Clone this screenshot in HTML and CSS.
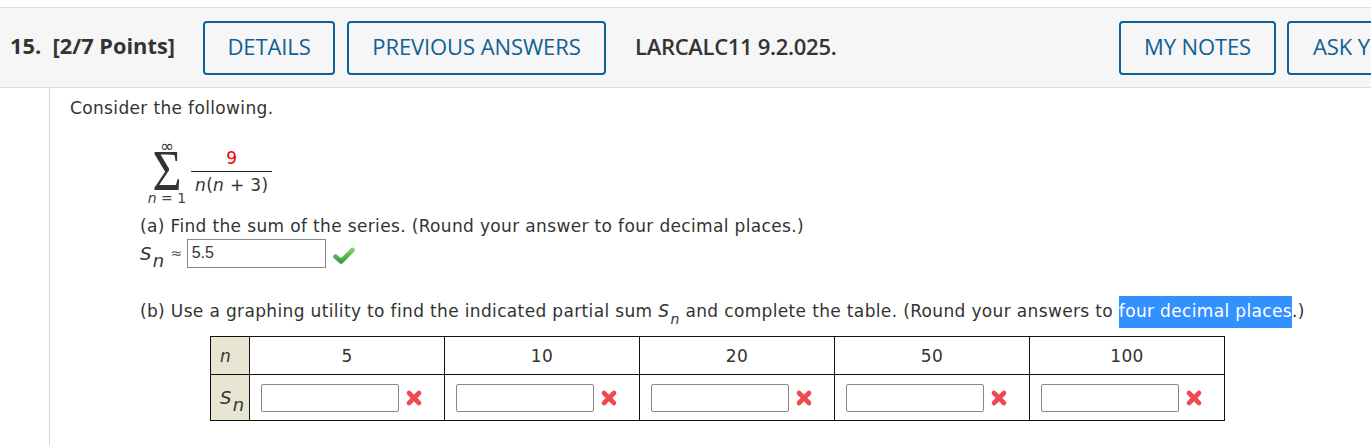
FILE: index.html
```html
<!DOCTYPE html>
<html>
<head>
<meta charset="utf-8">
<link rel="stylesheet" href="styles.css">
</head>
<body>
<div class="page">
  <header class="qhead">
    <div class="qnum">15.&nbsp; [2/7 Points]</div>
    <button class="btn btn-details">DETAILS</button>
    <button class="btn btn-prev">PREVIOUS ANSWERS</button>
    <div class="code">LARCALC11 9.2.025.</div>
    <div class="spacer"></div>
    <button class="btn btn-notes">MY NOTES</button>
    <button class="btn btn-ask">ASK YOUR TEACHER</button>
  </header>
  <main class="qbody">
    <p class="intro">Consider the following.</p>
    <div class="series">
      <div class="sigma">
        <span class="sup">∞</span>
        <span class="sym">Σ</span>
        <span class="sub"><i>n</i> = 1</span>
      </div>
      <div class="frac">
        <span class="num">9</span>
        <span class="den"><i>n</i>(<i>n</i> + 3)</span>
      </div>
    </div>
    <p class="part parta">(a) Find the sum of the series. (Round your answer to four decimal places.)</p>
    <div class="answer">
      <span class="sn"><i>S</i><sub><i>n</i></sub></span>
      <span class="approx">≈</span>
      <span class="box">5.5</span>
      <svg class="check" width="22" height="18" viewBox="0 0 22 18"><defs><linearGradient id="g" x1="0" y1="0" x2="0" y2="1"><stop offset="0" stop-color="#7ccf6a"/><stop offset="1" stop-color="#3f9e3f"/></linearGradient></defs><path d="M2.5 9.5 L8 14.5 L19.5 3" fill="none" stroke="url(#g)" stroke-width="4.6" stroke-linecap="round" stroke-linejoin="round"/></svg>
    </div>
    <p class="part partb">(b) Use a graphing utility to find the indicated partial sum <i>S</i><sub><i>n</i></sub> and complete the table. (Round your answers to <span class="sel">four decimal places</span>.)</p>
    <table class="tbl">
      <tr class="r1">
        <th><i>n</i></th>
        <td>5</td><td>10</td><td>20</td><td>50</td><td>100</td>
      </tr>
      <tr class="r2">
        <th><i>S</i><sub><i>n</i></sub></th>
        <td><span class="cell"><span class="inp"></span><svg class="xm" width="20" height="20" viewBox="0 0 20 20"><path d="M5 5 L15 15 M15 5 L5 15" stroke="#ee4a50" stroke-width="4.6" stroke-linecap="round"/></svg></span></td>
        <td><span class="cell"><span class="inp"></span><svg class="xm" width="20" height="20" viewBox="0 0 20 20"><path d="M5 5 L15 15 M15 5 L5 15" stroke="#ee4a50" stroke-width="4.6" stroke-linecap="round"/></svg></span></td>
        <td><span class="cell"><span class="inp"></span><svg class="xm" width="20" height="20" viewBox="0 0 20 20"><path d="M5 5 L15 15 M15 5 L5 15" stroke="#ee4a50" stroke-width="4.6" stroke-linecap="round"/></svg></span></td>
        <td><span class="cell"><span class="inp"></span><svg class="xm" width="20" height="20" viewBox="0 0 20 20"><path d="M5 5 L15 15 M15 5 L5 15" stroke="#ee4a50" stroke-width="4.6" stroke-linecap="round"/></svg></span></td>
        <td><span class="cell"><span class="inp"></span><svg class="xm" width="20" height="20" viewBox="0 0 20 20"><path d="M5 5 L15 15 M15 5 L5 15" stroke="#ee4a50" stroke-width="4.6" stroke-linecap="round"/></svg></span></td>
      </tr>
    </table>
  </main>
</div>
</body>
</html>
```
FILE: styles.css
```css
html, body {
  margin: 0;
  padding: 0;
  background: #fff;
  overflow: hidden;
}
.page {
  padding-top: 7px;
  width: 1371px;
  height: 445px;
  box-sizing: border-box;
}
.qhead {
  display: flex;
  align-items: center;
  height: 79px;
  background: #f6f6f6;
  border-top: 1px solid #dcdcdc;
  border-bottom: 1px solid #dcdcdc;
  font-family: "Open Sans", sans-serif;
  white-space: nowrap;
  overflow: hidden;
}
.qnum {
  margin-left: 10px;
  font-size: 21.8px;
  font-weight: 700;
  color: #333;
  width: 193px;
  flex: none;
  padding-bottom: 4px;
}
.btn {
  flex: none;
  height: 54px;
  box-sizing: border-box;
  border: 2px solid #0e6196;
  border-radius: 4px;
  background: transparent;
  color: #0e6196;
  font-family: "Open Sans", sans-serif;
  font-size: 22px;
  font-weight: 400;
  padding: 0 0 4px;
  letter-spacing: -0.1px;
  text-align: center;
}
.btn-details { width: 132px; margin-right: 12px; }
.btn-prev { width: 259px; margin-right: 29px; }
.code {
  font-size: 22px;
  font-weight: 600;
  color: #333;
  letter-spacing: -0.3px;
  padding-bottom: 4px;
}
.spacer { flex: 1; }
.btn-notes { width: 157px; margin-right: 11px; }
.btn-ask { width: 200px; margin-right: -116px; text-align: left; padding-left: 24px; }
.qbody {
  margin-left: 49px;
  border-left: 1px solid #d4d4d4;
  height: 357px;
  padding-left: 20px;
  font-family: "DejaVu Sans", Verdana, sans-serif;
  font-size: 17px;
  letter-spacing: 0.35px;
  color: #333;
  box-sizing: border-box;
  overflow: hidden;
}
.intro { margin: 0; padding-top: 9px; line-height: 22px; }
.series {
  display: flex;
  align-items: flex-start;
  margin-left: 75px;
  margin-top: 22px;
}
.sigma {
  display: flex;
  flex-direction: column;
  align-items: center;
  width: 44px;
  letter-spacing: 0;
}
.sigma .sup { font-size: 17px; height: 11px; line-height: 11px; }
.sigma .sym {
  font-family: "Liberation Serif", "Times New Roman", serif;
  font-size: 50px;
  height: 37px;
  line-height: 37px;
  transform: scaleY(1.12);
  margin-top: 1px;
}
.sigma .sub { font-size: 14px; line-height: 14px; margin-top: 1px; color: #444; }
.frac {
  display: flex;
  flex-direction: column;
  align-items: center;
  margin-left: 2px;
  margin-top: 6px;
}
.frac .num { color: #e00; line-height: 22px; padding-bottom: 2px; }
.frac .den {
  border-top: 1.5px solid #222;
  padding: 2px 4px 0;
  line-height: 22px;
}
.part { margin: 0 0 0 70px; line-height: 22px; }
.parta { margin-top: 10px; }
.answer {
  display: flex;
  align-items: center;
  margin-left: 70px;
  margin-top: 1px;
  height: 30px;
}
.answer .sn i { font-size: 18px; }
sub { font-size: 14px; vertical-align: -7px; line-height: 0; margin-left: 1px; }
.approx { font-size: 14px; margin: 0 4px 0 6px; color: #555; }
.box {
  display: inline-flex;
  align-items: center;
  width: 139px;
  height: 29px;
  box-sizing: border-box;
  border: 1px solid #888;
  padding-left: 4px;
  font-family: "Liberation Sans", Arial, sans-serif;
  font-size: 16px;
  letter-spacing: 0;
  color: #333;
}
.check { margin-left: 7px; margin-top: 6px; }
.partb { margin-top: 32px; }
.sel { background: #3390ff; color: #fff; padding: 5px 0 7px; }
.tbl {
  border-collapse: collapse;
  margin-left: 140px;
  margin-top: 14px;
}
.tbl th, .tbl td {
  border: 1px solid #111;
  padding: 0;
  font-weight: 400;
}
.tbl th {
  width: 39px;
  background: #e8e5d3;
  text-align: left;
  padding-left: 9px;
  box-sizing: border-box;
}
.tbl td { width: 194px; text-align: center; }
.tbl .r1 { height: 38px; }
.tbl .r2 { height: 46px; }
.tbl .r2 th i { font-size: 18px; }
.cell {
  display: flex;
  align-items: center;
  padding-left: 11px;
}
.inp {
  width: 138px;
  height: 28px;
  box-sizing: border-box;
  border: 1px solid #888;
  border-radius: 2px;
}
.xm { margin-left: 5px; }
```
